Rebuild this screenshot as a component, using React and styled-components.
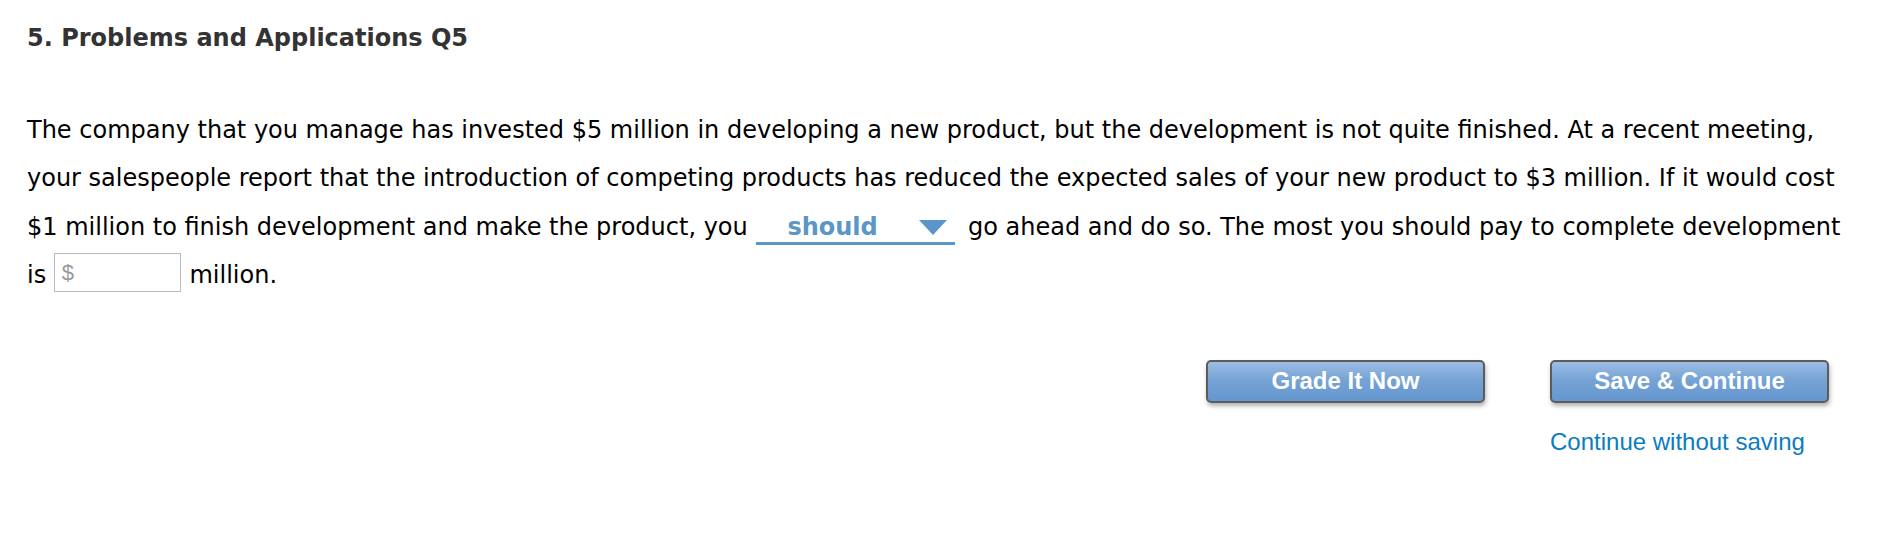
import React from "react";
import styled, { createGlobalStyle } from "styled-components";

const Global = createGlobalStyle`
  html, body { margin: 0; padding: 0; background: #fff; }
  body { font-family: "DejaVu Sans", Verdana, sans-serif; }
`;

const Page = styled.div`
  padding: 23px 27px 0 27px;
  width: 1900px;
  box-sizing: border-box;
`;

const Title = styled.h1`
  margin: 0;
  font-family: "DejaVu Sans", Verdana, sans-serif;
  font-weight: bold;
  font-size: 24px;
  line-height: 30px;
  color: #333;
`;

const Question = styled.p`
  margin: 53px 0 0 0;
  font-size: 24px;
  line-height: 48.4px;
  color: #000;
  width: 1830px;
`;

const Select = styled.span`
  display: inline-flex;
  align-items: baseline;
  justify-content: space-between;
  box-sizing: border-box;
  width: 199px;
  margin: 0 5px 0 1px;
  padding: 0 8px 0 31px;
  vertical-align: baseline;
  border-bottom: 3px solid #5b96c8;
  color: #5b96c8;
  font-weight: bold;
  font-size: 24px;
  line-height: 30px;
`;

const Caret = styled.span`
  width: 0;
  height: 0;
  border-left: 14px solid transparent;
  border-right: 14px solid transparent;
  border-top: 15px solid #5b96c8;
  margin-bottom: 1px;
`;

const Input = styled.span`
  display: inline-flex;
  align-items: center;
  box-sizing: border-box;
  width: 127px;
  height: 39px;
  margin: 0 1px 0 0;
  padding-left: 7px;
  vertical-align: 3px;
  border: 1px solid #bbb;
  background: #fff;
  font-family: "Liberation Sans", Arial, sans-serif;
  font-size: 22px;
  line-height: 25px;
  color: #9a9a9a;
`;

const Actions = styled.div`
  display: flex;
  align-items: flex-start;
  gap: 65px;
  margin: 60px 0 0 1179px;
`;

const Column = styled.div`
  display: flex;
  flex-direction: column;
  align-items: flex-start;
`;

const Button = styled.button`
  box-sizing: border-box;
  width: 279px;
  height: 43px;
  border: 2px solid #5c5c5c;
  border-radius: 5px;
  background: linear-gradient(#9cbde3 0%, #76a3d5 45%, #6496cf 100%);
  box-shadow: 1px 3px 4px rgba(0, 0, 0, 0.3);
  color: #fff;
  font-family: "Liberation Sans", Arial, sans-serif;
  font-weight: bold;
  font-size: 24px;
  padding: 0;
  cursor: pointer;
`;

const Link = styled.a`
  margin-top: 25px;
  font-family: "Liberation Sans", Arial, sans-serif;
  font-size: 24px;
  line-height: 28px;
  color: #0b7cc1;
  text-decoration: none;
`;

export default function App() {
  return (
    <>
      <Global />
      <Page>
        <Title>5. Problems and Applications Q5</Title>
        <Question>
          The company that you manage has invested $5 million in developing a new product, but the
          development is not quite finished. At a recent meeting, your salespeople report that the
          introduction of competing products has reduced the expected sales of your new product to $3
          million. If it would cost $1 million to finish development and make the product, you{" "}
          <Select>
            should
            <Caret />
          </Select>{" "}
          go ahead and do so. The most you should pay to complete development is{" "}
          <Input>$</Input> million.
        </Question>
        <Actions>
          <Button>Grade It Now</Button>
          <Column>
            <Button>Save &amp; Continue</Button>
            <Link href="#">Continue without saving</Link>
          </Column>
        </Actions>
      </Page>
    </>
  );
}
